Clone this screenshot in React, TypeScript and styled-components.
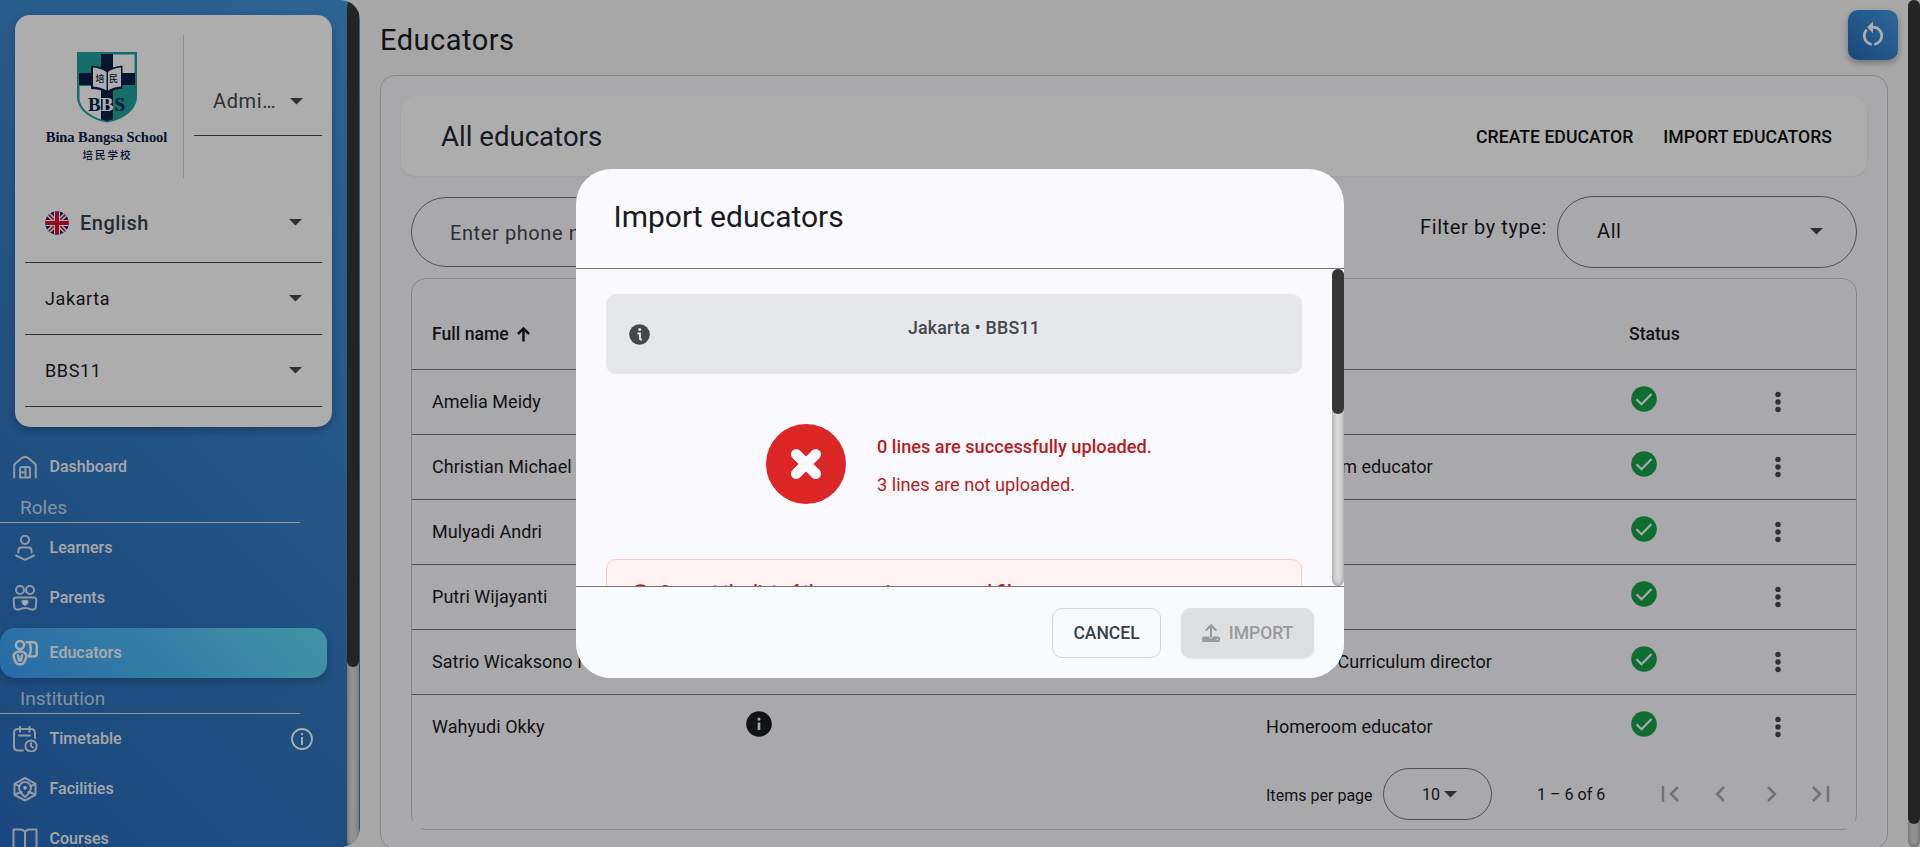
import React from "react";
import styled, { createGlobalStyle, css } from "styled-components";

const GlobalStyle = createGlobalStyle`
  *, *::before, *::after { box-sizing: border-box; }
  html, body { margin: 0; height: 100%; overflow: hidden; }
  body { background: #f6f6f6; font-family: Roboto, "Liberation Sans", sans-serif; color: #1a1b1f; font-size: 18px; }
  #root { height: 100%; }
  svg { display: block; flex: none; }
`;

const Page = styled.div`
  display: flex;
  height: 100vh;
  position: relative;
  overflow: hidden;
`;

/* Scroll bar */
const Track = styled.div`
  width: 12px;
  flex: none;
  align-self: stretch;
  background: #d9d9d9;
  border-radius: 6px;
  box-shadow: inset 0 0 5px rgba(0, 0, 0, 0.4);
`;
const Thumb = styled.div<{ $height: number }>`
  height: ${(p) => p.$height}px;
  background: #363636;
  border-radius: 6px;
`;

/* Sidebar */
const Sidebar = styled.aside`
  width: 360px;
  flex: none;
  display: flex;
  padding-right: 1px;
  border-radius: 0 20px 20px 0;
  overflow: hidden;
  background: linear-gradient(45deg, #286bbb, #2f76bf 35%, #4295dc);
`;
const SidebarContent = styled.div`
  flex: 1;
  min-width: 0;
  overflow: hidden;
`;
const ProfileCard = styled.section`
  margin: 15px;
  width: 317px;
  height: 412px;
  padding: 20px 10px 0;
  border-radius: 15px;
  background: #fff;
  box-shadow: 0 4px 8px rgba(0, 0, 0, 0.25);
`;
const BrandRow = styled.div`
  display: flex;
  height: 143px;
`;
const Brand = styled.div`
  width: 159px;
  padding: 16px 12px 0 17px;
  border-right: 1px solid #d1d5db;
  display: flex;
  flex-direction: column;
  align-items: center;
`;
const BrandName = styled.div`
  margin-top: 4px;
  color: #0b2047;
  font: 700 14.6px/20px "Liberation Serif", serif;
  white-space: nowrap;
  letter-spacing: -0.1px;
`;
const BrandSub = styled.div`
  color: #0b2047;
  font: 500 10.5px/16px "Noto Sans CJK SC", sans-serif;
  letter-spacing: 2px;
  padding-left: 2px;
`;
const RoleSelect = styled.div`
  margin: 31px 0 0 10px;
  width: 128px;
  height: 70px;
  padding: 1px 19px 0 19px;
  display: flex;
  align-items: center;
  justify-content: space-between;
  border-bottom: 1px solid #44474e;
  color: #44474e;
  font-size: 20px;
  letter-spacing: 0.6px;
`;
const CardSelect = styled.div<{ $height: number; $large?: boolean }>`
  height: ${(p) => p.$height}px;
  padding: 0 20px 1px 20px;
  display: flex;
  align-items: center;
  border-bottom: 1px solid #44474e;
  font-size: 18px;
  letter-spacing: 0.6px;
  ${(p) =>
    p.$large &&
    css`
      font-size: 20px;
      font-weight: 500;
      color: #374151;
      letter-spacing: 0.5px;
      padding-top: 5px;
      padding-bottom: 0;
    `}
  & > svg:last-child { margin-left: auto; }
  & > svg + span { margin-left: 11px; }
`;
const NavItem = styled.a<{ $active?: boolean }>`
  display: flex;
  align-items: center;
  height: 50px;
  width: 327px;
  padding: 0 14px 0 12px;
  color: #fff;
  font-size: 16px;
  font-weight: 500;
  letter-spacing: 0.02px;
  ${(p) =>
    p.$active &&
    css`
      margin: 5px 0;
      border-radius: 15px;
      font-weight: 600;
      background: linear-gradient(45deg, #3b9df5, #61dbf4);
      box-shadow: 0 4px 8px rgba(0, 0, 0, 0.2);
    `}
`;
const NavLabel = styled.span`
  flex: 1;
  padding-bottom: 1px;
  margin-left: 11.5px;
  opacity: 0.95;
`;
const NavHeading = styled.h3`
  margin: 0;
  width: 300px;
  height: 31px;
  padding: 4px 0 0 20px;
  border-bottom: 1px solid #e5e1e1;
  color: rgba(255, 255, 255, 0.72);
  font-size: 19px;
  font-weight: 400;
  line-height: 23px;
`;

/* Main area */
const Main = styled.main`
  flex: 1;
  min-width: 0;
  padding: 10px 20px 0 20px;
`;
const PageHeader = styled.header`
  display: flex;
  justify-content: space-between;
  height: 65px;
  margin-right: -10px;
  h1 { margin: 0; font-size: 29px; font-weight: 400; line-height: 60px; letter-spacing: 0.5px; }
`;
const RefreshButton = styled.button`
  width: 50px;
  height: 50px;
  border: 0;
  padding: 0;
  border-radius: 10px;
  display: grid;
  place-items: center;
  background: linear-gradient(45deg, #286ab8, #4299e1);
  box-shadow: 0 3px 6px rgba(0, 0, 0, 0.3);
`;
const Panel = styled.section`
  height: 774px;
  padding: 20px 20px 0;
  border: 1px solid #c5c6d0;
  border-radius: 15px;
  background: #faf9fd;
`;
const Toolbar = styled.div`
  display: flex;
  align-items: center;
  height: 80px;
  padding: 0 35px 0 40px;
  border-radius: 15px;
  background: #fff;
  box-shadow: 0 1px 3px rgba(0, 0, 0, 0.08);
  h2 { margin: 0 auto 0 0; font-size: 27.6px; font-weight: 400; color: #1f2937; }
`;
const TextButton = styled.button`
  border: 0;
  padding: 2px 0 0;
  margin-left: 30px;
  background: none;
  color: #111;
  font: 500 17.65px/24px Roboto, sans-serif;
`;
const Filters = styled.div`
  display: flex;
  align-items: center;
  height: 72px;
  margin: 20px 10px 10px;
`;
const SearchField = styled.div`
  width: 500px;
  height: 70px;
  margin-right: auto;
  padding-left: 38px;
  border: 1px solid #74777f;
  border-radius: 35px;
  line-height: 70px;
  font-size: 20px;
  letter-spacing: 0.6px;
  color: #44474e;
`;
const FilterLabel = styled.label`
  margin: -10px 10px 0 0;
  font-size: 20px;
  letter-spacing: 0.6px;
`;
const FilterSelect = styled.div`
  display: flex;
  align-items: center;
  justify-content: space-between;
  width: 300px;
  height: 72px;
  padding: 0 33px 2px 39px;
  border: 1px solid #74777f;
  border-radius: 36px;
  font-size: 20px;
  letter-spacing: 0.6px;
`;
const TableCard = styled.div`
  position: relative;
  height: 552px;
  margin: 0 10px;
  border: 1px solid #c5c6d0;
  border-radius: 15px;
`;
const CornerMask = styled.i<{ $side: "left" | "right" }>`
  position: absolute;
  bottom: -1px;
  ${(p) => p.$side}: -1px;
  width: 10px;
  height: 9px;
  background: #faf9fd;
`;
const Row = styled.div<{ $head?: boolean; $last?: boolean }>`
  display: grid;
  grid-template-columns: 300px 534px 348px 120px 1fr;
  align-items: center;
  height: ${(p) => (p.$head ? 91 : 65)}px;
  padding: ${(p) => (p.$head ? "20px 0 0 20px" : "0 0 2px 20px")};
  border-bottom: 1px solid ${(p) => (p.$last ? "transparent" : "#74777f")};
  font-size: ${(p) => (p.$head ? 17.6 : 18)}px;
  letter-spacing: ${(p) => (p.$head ? 0 : 0.04)}px;
  font-weight: ${(p) => (p.$head ? 500 : 400)};
  white-space: nowrap;
`;
const Cell = styled.div<{ $shift?: number }>`
  display: flex;
  align-items: center;
  min-width: 0;
  padding-left: ${(p) => p.$shift ?? 0}px;
  & > svg { margin-bottom: 4px; }
`;
const HeadCell = styled(Cell)`
  gap: 8px;
  & > svg { margin-bottom: 1px; }
`;
const MenuCell = styled(Cell)`
  & > svg { margin: 1px 0 0; }
`;
const Paginator = styled.div`
  display: flex;
  align-items: center;
  height: 68px;
  padding-left: 854px;
  font-size: 16px;
  letter-spacing: 0.02px;
`;
const ItemsLabel = styled.span`
  width: 107px;
  padding-top: 2px;
  white-space: nowrap;
`;
const PageSize = styled.div`
  display: flex;
  align-items: center;
  justify-content: center;
  gap: 4px;
  width: 109px;
  height: 52px;
  margin: 0 45px 0 10px;
  padding-left: 4px;
  border: 1px solid #74777f;
  border-radius: 26px;
`;
const PageButtons = styled.div`
  display: flex;
  gap: 20px;
  margin-left: auto;
  padding-right: 20px;
`;

/* Dialog */
const Backdrop = styled.div`
  position: absolute;
  inset: 0;
  background: rgba(0, 0, 0, 0.32);
  display: flex;
  align-items: center;
  justify-content: center;
`;
const Dialog = styled.section`
  display: flex;
  flex-direction: column;
  width: 768px;
  height: 509px;
  border-radius: 35px;
  overflow: hidden;
  background: #faf9fd;
`;
const DialogTitle = styled.h2`
  margin: 0;
  height: 100px;
  padding-left: 37.5px;
  border-bottom: 1px solid #74777f;
  font-size: 30px;
  font-weight: 400;
  line-height: 95px;
`;
const DialogBody = styled.div`
  display: flex;
  height: 317px;
`;
const DialogContent = styled.div`
  flex: 1;
  padding: 25px 30px 0;
  overflow: hidden;
`;
const InfoBanner = styled.div`
  display: flex;
  align-items: center;
  height: 80px;
  padding: 0 23px;
  border-radius: 10px;
  background: #e5e7eb;
  color: #44474e;
  font-weight: 500;
  font-size: 17.8px;
  span { flex: 1; text-align: center; padding: 0 0 14px 19px; letter-spacing: 0.2px; }
`;
const Result = styled.div`
  display: flex;
  align-items: center;
  gap: 31px;
  height: 80px;
  margin: 50px 0 55px 160px;
  color: #b91c1c;
  font-size: 18.2px;
`;
const ResultText = styled.div`
  padding-top: 4px;
  p { margin: 0; line-height: 38px; }
  p:first-child { font-weight: 500; }
`;
const ErrorBox = styled.div`
  display: flex;
  align-items: flex-start;
  gap: 8px;
  height: 160px;
  padding: 20px 23px;
  border: 1px solid #fecaca;
  border-radius: 10px;
  background: #fef2f2;
  color: #b91c1c;
  font-size: 18px;
  font-weight: 500;
  line-height: 24px;
  & > svg { margin-top: 4px; }
`;
const DialogActions = styled.footer`
  display: flex;
  justify-content: flex-end;
  gap: 20px;
  flex: 1;
  padding: 21px 30px 0 0;
  border-top: 1px solid #74777f;
  background: #f9fafb;
`;
const ActionButton = styled.button<{ $disabled?: boolean }>`
  display: flex;
  align-items: center;
  justify-content: center;
  gap: 9px;
  width: ${(p) => (p.$disabled ? 133 : 109)}px;
  height: 50px;
  padding: 0;
  border: 1px solid ${(p) => (p.$disabled ? "transparent" : "#d1d5db")};
  border-radius: 10px;
  background: ${(p) => (p.$disabled ? "#dedfe1" : "transparent")};
  color: ${(p) => (p.$disabled ? "#98999b" : "#374151")};
  font: 500 17.5px/24px Roboto, sans-serif;
  ${(p) => p.$disabled && "box-shadow: 0 1px 2px rgba(0,0,0,.08);"}
`;

/* Icons */
const Caret = ({ color = "#44474e" }: { color?: string }) => (
  <svg width="13" height="7" viewBox="0 0 13 7"><path d="M0 0h13L6.5 6.5z" fill={color} /></svg>
);

const Crest = () => (
  <svg width="62" height="72" viewBox="0 0 62 72">
    <defs>
      <clipPath id="crest"><path d="M2.5 2.5h57v43C59.500 58 45 67 31 70C17 67 2.500 58 2.500 45.500z" /></clipPath>
    </defs>
    <path d="M1 1h60v44.500C61 60 46 69 31 71.500C16 69 1 60 1 45.500z" fill="#1fa39b" />
    <g clipPath="url(#crest)">
      <path d="M3.500 3.500h22v20h-22zM37 35h23v36H37z" fill="#1fa39b" />
      <path d="M37 3.500h21.500v20H37zM3.500 35h22v36C10 64 3.500 55 3.500 47z" fill="#fff" />
      <path d="M25 3h12v69H25zM3 22h56v12H3z" fill="#0b2047" />
    </g>
    <path d="M15 14.500l3 .5c5 .500 10 2 13 4.500c3-2.500 8-4 13-4.500l2.500-.5V38c-6 0-12 1.500-15.500 4C27 39.500 21 38 15 38z" fill="#0b2047" />
    <path d="M17 16.500c5 .500 10 2 13.500 4.500v18.500C27 37 22 36 17 35.500zM45 16.500c-5 .500-10 2-13 4.500v18.500c3-2.500 8-3.500 13-4z" fill="#fff" />
    <text x="19.500" y="31" fontFamily="Noto Sans CJK SC, sans-serif" fontSize="9" fontWeight="500" fill="#0b2047">培</text>
    <text x="33" y="31" fontFamily="Noto Sans CJK SC, sans-serif" fontSize="9" fontWeight="500" fill="#0b2047">民</text>
    <g fontFamily="Liberation Serif, serif" fontWeight="700" fontSize="19">
      <text x="12" y="60" fill="#0b2047">B</text>
      <text x="24.800" y="60" fill="#fff">B</text>
      <text x="38.500" y="60" fill="#0b2047">S</text>
    </g>
  </svg>
);

const Flag = () => (
  <svg width="24" height="24" viewBox="0 0 24 24">
    <clipPath id="flag"><circle cx="12" cy="12" r="11.800" /></clipPath>
    <g clipPath="url(#flag)">
      <path d="M0 0h24v24H0z" fill="#12307f" />
      <path d="M0 0l24 24M24 0L0 24" stroke="#fff" strokeWidth="4.500" />
      <path d="M0 0l24 24M24 0L0 24" stroke="#e0213f" strokeWidth="1.800" />
      <path d="M12 0v24M0 12h24" stroke="#fff" strokeWidth="6" />
      <path d="M12 0v24M0 12h24" stroke="#d80f30" strokeWidth="4" />
    </g>
  </svg>
);

const NavSvg = ({ children }: { children: React.ReactNode }) => (
  <svg width="26" height="26" viewBox="0 0 26 26" fill="none" stroke="#fff" strokeOpacity="0.8" strokeWidth="2" strokeLinecap="round" strokeLinejoin="round">{children}</svg>
);
const icons: Record<string, React.ReactNode> = {
  Dashboard: (<NavSvg><path d="M2.200 23.500V10.500L9.500 4.200Q13 1.500 16.500 4.200L23.800 10.500V23.500" /><path d="M8 23.500V14.500Q8 13 9.500 13h7Q18 13 18 14.500V23.500zM13.500 13v10.500M8 18.200h5.500" /></NavSvg>),
  Learners: (<NavSvg><circle cx="13" cy="4.800" r="4.100" /><path d="M6.500 17.500v-2q0-3 3-3h7q3 0 3 3V17.500M4 20.500l9 4.300l9-4.300" /></NavSvg>),
  Parents: (<NavSvg><circle cx="8" cy="5" r="4" /><circle cx="18" cy="5" r="4" /><path d="M4 12.500h18q2.500 0 2.300 2.500l-.5 7q-.3 2.500-3 2.500H19q-3-1.500-6-1.500t-6 1.500H5.200q-2.700 0-3-2.500l-.5-7q-.2-2.500 2.300-2.500z" /><path d="M13 20c-5-3.500 -1.500-5.500 0-3.700c1.500-1.800 5 .2 0 3.700z" fill="#fff" /></NavSvg>),
  Educators: (<NavSvg><g strokeWidth="2.500" strokeOpacity="0.95"><circle cx="8" cy="5" r="4" /><path d="M14.500 2.200h6.300q4 0 4 4v7.300q0 3-3.500 3H17q3-6 1-12M1.800 14.500q2-3 6.200-3t6.200 3q.5 2-.8 5q-1.200 5-5.400 5t-5.400-5q-1.300-3-.8-5zM6 15.500l1 5M10 15.500l-1 5" /></g></NavSvg>),
  Timetable: (<NavSvg><path d="M11 24.500H6q-4 0-4-4V7q0-4 4-4h13q4 0 4 4v5M8 .8v5M17.500 .8v5M7 9.500h11" /><circle cx="19" cy="20" r="5.600" /><path d="M19 17v3l2 1.500" /></NavSvg>),
  Facilities: (<NavSvg><path d="M13 2l10.500 5.800v11L13 24.500L2.500 18.800v-11zM2.500 7.800l5 2.500M23.500 7.800l-5 2.500M2.500 18.500l7-2.500M23.500 18.500l-7-2.500" /><path d="M13 21q-6-5.500-6-9a6 6 0 0 1 12 0q0 3.500-6 9z" /><circle cx="13" cy="11.800" r="1" fill="#fff" /></NavSvg>),
  Courses: (<NavSvg><path d="M13 6.500q-1-3-4.500-3H1.500v19H9.500q3 0 3.500 2q.5-2 3.500-2h8V3.500h-7q-3.500 0-4.500 3zM13 6.500v17" /></NavSvg>),
};
const InfoOutline = () => (
  <svg width="22" height="22" viewBox="0 0 22 22"><circle cx="11" cy="11" r="10" fill="none" stroke="#fff" strokeWidth="1.800" /><path d="M11 9v8M11 5v2" stroke="#fff" strokeWidth="1.900" /></svg>
);
const Reload = () => (
  <svg width="32" height="32" viewBox="0 0 24 24" fill="#fff"><path d="M12 5V1.800L7.600 6.200L12 10.600V7.100c3 0 5.500 2.500 5.500 5.500 0 2.700-2 5-4.600 5.400v2c3.800-.5 6.700-3.600 6.700-7.400C19.600 8.400 16.200 5 12 5zM6.500 12.600c0-1.500.6-2.800 1.600-3.800L6.700 7.400C5.300 8.700 4.400 10.500 4.400 12.600c0 3.800 2.900 6.900 6.700 7.400v-2c-2.600-.4-4.600-2.700-4.600-5.400z" /></svg>
);
const Check = () => (
  <svg width="26" height="26" viewBox="0 0 26 26"><circle cx="13" cy="13" r="12.800" fill="#16a34a" /><path d="M5.500 13.200l5 5L20.500 8" fill="none" stroke="#faf9fd" strokeWidth="2.200" /></svg>
);
const InfoFilled = () => (
  <svg width="26" height="26" viewBox="0 0 26 26"><circle cx="13" cy="13" r="12.800" fill="#1a1b1f" /><path d="M13 11.500v7.500M13 6.800v2.700" stroke="#faf9fd" strokeWidth="2.600" /></svg>
);
const Dots = () => (
  <svg width="6" height="22" viewBox="0 0 6 22" fill="#44474e"><circle cx="3" cy="3.400" r="2.700" /><circle cx="3" cy="11" r="2.700" /><circle cx="3" cy="18.500" r="2.700" /></svg>
);
const SortArrow = () => (
  <svg width="13" height="16" viewBox="0 0 14 16" fill="none" stroke="#1a1b1f" strokeWidth="2.700"><path d="M7 16V2M1 8l6-6l6 6" /></svg>
);
const PageIcon = ({ d }: { d: string }) => (
  <svg width="30" height="30" viewBox="0 0 30 30" fill="none" stroke="#a9a9ad" strokeWidth="2.500"><path d={d} /></svg>
);
const InfoBadge = ({ color, ground }: { color: string; ground: string }) => (
  <svg width="21" height="21" viewBox="0 0 21 21"><circle cx="10.500" cy="10.500" r="10.300" fill={color} /><circle cx="10.700" cy="5.600" r="1.500" fill={ground} /><path d="M8.500 9.500h2.500v5q0 1.500 2 1" fill="none" stroke={ground} strokeWidth="1.900" /></svg>
);
const Failed = () => (
  <svg width="80" height="80" viewBox="0 0 80 80"><circle cx="40" cy="40" r="40" fill="#dc2626" /><path d="M30.200 30.200l19.600 19.600M49.800 30.200L30.200 49.800" stroke="#faf9fd" strokeWidth="10.500" strokeLinecap="round" /></svg>
);
const Upload = () => (
  <svg width="18" height="18" viewBox="0 0 18 18"><path d="M9 13V1.500M4.300 6L9 1.300L13.700 6" fill="none" stroke="#98999b" strokeWidth="2" strokeLinecap="round" strokeLinejoin="round" /><path fillRule="evenodd" d="M2 12.500h5v1q0 1 2 1t2-1v-1h5q2 0 2 1.500v2.500q0 1.500-2 1.500H2q-2 0-2-1.500V14q0-1.500 2-1.500zM15.300 14.400a.8.8 0 1 0 .1 0z" fill="#98999b" /></svg>
);

const people: { name: string; role?: string; info?: boolean }[] = [
  { name: "Amelia Meidy" },
  { name: "Christian Michael", role: "Homeroom educator" },
  { name: "Mulyadi Andri" },
  { name: "Putri Wijayanti" },
  { name: "Satrio Wicaksono N", role: "Teacher, Curriculum director" },
  { name: "Wahyudi Okky", role: "Homeroom educator", info: true },
];

const Nav = ({ label, active, info }: { label: string; active?: boolean; info?: boolean }) => (
  <NavItem $active={active}>
    {icons[label]}
    <NavLabel>{label}</NavLabel>
    {info && <InfoOutline />}
  </NavItem>
);

export default function App() {
  return (
    <Page>
      <GlobalStyle />
      <Sidebar>
        <SidebarContent>
          <ProfileCard>
            <BrandRow>
              <Brand>
                <Crest />
                <BrandName>Bina Bangsa School</BrandName>
                <BrandSub>培民学校</BrandSub>
              </Brand>
              <RoleSelect>Admi…<Caret /></RoleSelect>
            </BrandRow>
            <CardSelect $height={85} $large><Flag /><span>English</span><Caret /></CardSelect>
            <CardSelect $height={72}><span>Jakarta</span><Caret /></CardSelect>
            <CardSelect $height={72}><span>BBS11</span><Caret /></CardSelect>
          </ProfileCard>
          <nav>
            <Nav label="Dashboard" />
            <NavHeading>Roles</NavHeading>
            <Nav label="Learners" />
            <Nav label="Parents" />
            <Nav label="Educators" active />
            <NavHeading>Institution</NavHeading>
            <Nav label="Timetable" info />
            <Nav label="Facilities" />
            <Nav label="Courses" />
          </nav>
        </SidebarContent>
        <Track><Thumb $height={667} /></Track>
      </Sidebar>

      <Main>
        <PageHeader>
          <h1>Educators</h1>
          <RefreshButton><Reload /></RefreshButton>
        </PageHeader>
        <Panel>
          <Toolbar>
            <h2>All educators</h2>
            <TextButton>CREATE EDUCATOR</TextButton>
            <TextButton>IMPORT EDUCATORS</TextButton>
          </Toolbar>
          <Filters>
            <SearchField>Enter phone number</SearchField>
            <FilterLabel>Filter by type:</FilterLabel>
            <FilterSelect>All<Caret /></FilterSelect>
          </Filters>
          <TableCard>
            <Row $head>
              <HeadCell>Full name<SortArrow /></HeadCell>
              <HeadCell />
              <HeadCell />
              <HeadCell $shift={15}>Status</HeadCell>
            </Row>
            {people.map((p, i) => (
              <Row key={p.name} $last={i === people.length - 1}>
                <Cell>{p.name}</Cell>
                <Cell $shift={14}>{p.info && <InfoFilled />}</Cell>
                <Cell>{p.role}</Cell>
                <Cell $shift={17}><Check /></Cell>
                <MenuCell $shift={41}><Dots /></MenuCell>
              </Row>
            ))}
            <Paginator>
              <ItemsLabel>Items per page</ItemsLabel>
              <PageSize>10<Caret /></PageSize>
              1 – 6 of 6
              <PageButtons>
                <PageIcon d="M7 7v16M22 8l-7 7l7 7" />
                <PageIcon d="M18 8l-7 7l7 7" />
                <PageIcon d="M12 8l7 7l-7 7" />
                <PageIcon d="M7 8l7 7l-7 7M22 7v16" />
              </PageButtons>
            </Paginator>
            <CornerMask $side="left" />
            <CornerMask $side="right" />
          </TableCard>
        </Panel>
      </Main>
      <Track><Thumb $height={824} /></Track>

      <Backdrop>
        <Dialog>
          <DialogTitle>Import educators</DialogTitle>
          <DialogBody>
            <DialogContent>
              <InfoBanner><InfoBadge color="#44474e" ground="#e5e7eb" /><span>Jakarta • BBS11</span></InfoBanner>
              <Result>
                <Failed />
                <ResultText>
                  <p>0 lines are successfully uploaded.</p>
                  <p>3 lines are not uploaded.</p>
                </ResultText>
              </Result>
              <ErrorBox>
                <InfoBadge color="#b91c1c" ground="#fef2f2" />
                Correct the list of the errors in your saved file
              </ErrorBox>
            </DialogContent>
            <Track><Thumb $height={145} /></Track>
          </DialogBody>
          <DialogActions>
            <ActionButton>CANCEL</ActionButton>
            <ActionButton $disabled><Upload />IMPORT</ActionButton>
          </DialogActions>
        </Dialog>
      </Backdrop>
    </Page>
  );
}
